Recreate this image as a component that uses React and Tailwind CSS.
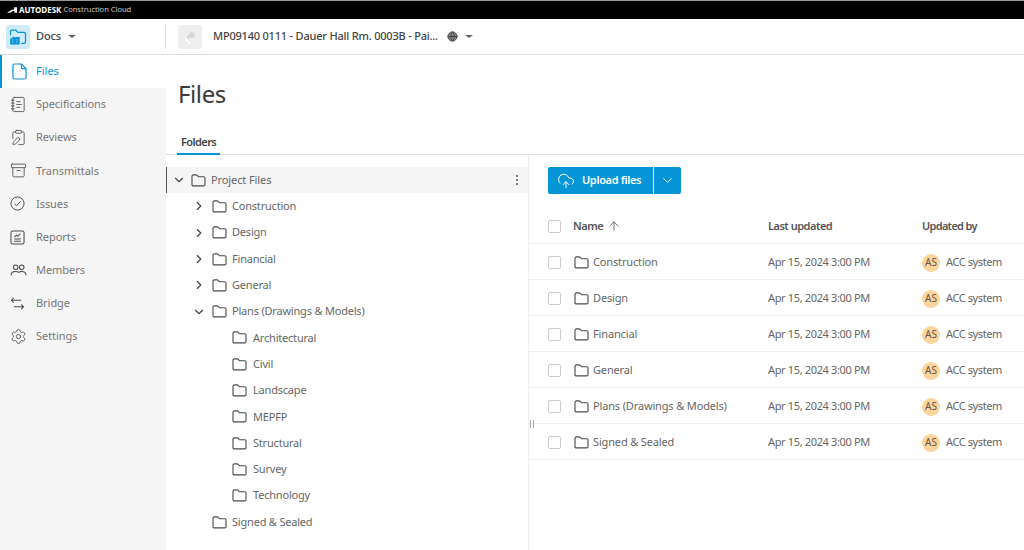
import { Archive, ArrowUp, ChevronDown, ChevronRight, ClipboardPen, CloudUpload, Globe, NotebookText, Settings } from "lucide-react";

const FolderIcon = ({ className = "" }) => (
  <svg viewBox="0 0 16 14" fill="none" stroke="currentColor" strokeWidth="1.2" className={`w-[15px] h-[13px] text-[#4a4a4a] ${className}`}>
    <path d="M1 11.5V2.3C1 1.6 1.6 1 2.3 1h3.2c.5 0 .8.2 1.1.5L8 3h5.7c.7 0 1.3.6 1.3 1.3v7.2c0 .7-.6 1.3-1.3 1.3H2.3C1.6 12.8 1 12.2 1 11.5Z" />
  </svg>
);

const FileIcon = () => (
  <svg viewBox="0 0 16 18" fill="none" stroke="currentColor" strokeWidth="1.3" className="w-[15px] h-[17px]">
    <path d="M3 1h7l5 5v9c0 1.1-.9 2-2 2H3c-1.1 0-2-.9-2-2V3c0-1.1.9-2 2-2Z" />
    <path d="M10 1v3.5c0 .8.7 1.5 1.5 1.5H15" />
  </svg>
);

const IssueIcon = () => (
  <svg viewBox="0 0 16 16" fill="none" stroke="currentColor" strokeWidth="1" className="w-[15px] h-[15px]">
    <circle cx="8" cy="8" r="7" />
    <path d="M4.8 8.3 7 10.5l4.2-4.8" />
  </svg>
);

const ReportIcon = () => (
  <svg viewBox="0 0 16 16" fill="none" stroke="currentColor" strokeWidth="1.1" className="w-[15px] h-[15px]">
    <rect x="1" y="1" width="14" height="14" rx="2" />
    <path d="M4.5 7.5 7 5.5l1.3 1.2L11 4M4.5 9.5h7M4.5 12h7" />
  </svg>
);

const MembersIcon = () => (
  <svg viewBox="0 0 18 14" fill="none" stroke="currentColor" strokeWidth="1.1" className="w-[17px] h-[13px]">
    <circle cx="6" cy="3.5" r="2.4" />
    <circle cx="12.5" cy="3.5" r="2.4" />
    <path d="M1 12c0-2.6 2.2-4 5-4 1.3 0 2.4.3 3.2 1 .8-.7 2-1 3.3-1 2.7 0 4.5 1.4 4.5 4" />
  </svg>
);

const BridgeIcon = () => (
  <svg viewBox="0 0 16 14" fill="none" stroke="currentColor" strokeWidth="1.1" className="w-[15px] h-[13px]">
    <path d="M4 1 1.5 3.5 4 6M1.5 3.5H12M12 8l2.5 2.5L12 13M14.5 10.5H4" />
  </svg>
);

const HubIcon = () => (
  <svg viewBox="0 0 24 24" fill="none" className="w-[20px] h-[20px]">
    <path d="M3 10V5.5C3 4.4 3.8 3.6 4.8 3.6h4.5L12 6.4h7.2c1.1 0 1.8.8 1.8 1.8v9.6c0 1.1-.8 1.9-1.8 1.9H16" stroke="#0696d7" strokeWidth="1.5" />
    <path d="M2.5 14.5 7 11.5l2 1.5v-1h5v9H2.5z" fill="#0696d7" />
    <path d="M5 15.5h1.5M5 18h1.5M10 15.5h1.5M10 18h1.5" stroke="#cdebf8" strokeWidth="1" />
  </svg>
);

const ProjectThumb = () => (
  <svg viewBox="0 0 24 24" className="w-[24px] h-[24px]">
    <path d="M13 6.5 17 8.5 16 13 12 12.5 9.5 14 8.5 12.5z" fill="#d6d6d6" />
    <path d="M7.5 13.5 12 18.5" stroke="#fff" strokeWidth="2" fill="none" />
  </svg>
);

const LogoMark = () => (
  <svg viewBox="0 0 14 8" className="w-[10px] h-[6px] fill-white">
    <path d="M0 8 7.5 3.2H10V0h4v8h-3.6V5.5H8.3L4.5 8z" />
  </svg>
);

const sideItems = [
  ["Specifications", <NotebookText key="a" size={17} strokeWidth={1.2} />],
  ["Reviews", <ClipboardPen key="b" size={17} strokeWidth={1.2} />],
  ["Transmittals", <Archive key="c" size={17} strokeWidth={1.2} />],
  ["Issues", <IssueIcon key="d" />],
  ["Reports", <ReportIcon key="e" />],
  ["Members", <MembersIcon key="f" />],
  ["Bridge", <BridgeIcon key="g" />],
  ["Settings", <Settings key="h" size={17} strokeWidth={1.2} />],
];

const treeTop = ["Construction", "Design", "Financial", "General"];
const planFolders = ["Architectural", "Civil", "Landscape", "MEPFP", "Structural", "Survey", "Technology"];
const tableRows = ["Construction", "Design", "Financial", "General", "Plans (Drawings & Models)", "Signed & Sealed"];

function TreeRow({ label, indent, gap, icon }) {
  return (
    <div className={`flex h-[26.3px] items-center ${indent}`}>
      <span className="flex w-[20px] justify-start text-[#444]">{icon}</span>
      <FolderIcon />
      <span className={`${gap} tracking-[-0.2px] text-[#666]`}>{label}</span>
    </div>
  );
}

export default function App() {
  return (
    <div className="flex h-[550px] w-[1024px] flex-col overflow-hidden bg-white text-[11px] [font-family:'Noto_Sans',sans-serif]">
      <div className="flex h-[19px] items-center gap-[2px] border-t border-[#999] bg-black pl-[7px] text-[8px] text-white">
        <LogoMark />
        <span className="font-bold">AUTODESK</span>
        <span className="text-[7.5px] text-[#ccc]">Construction Cloud</span>
      </div>

      <div className="flex h-[36px] items-center border-b border-[#ddd]">
        <div className="flex w-[165px] items-center pl-[6px]">
          <div className="flex h-[24px] w-[24px] items-center justify-center rounded-[3px] bg-[#cdebf8]">
            <HubIcon />
          </div>
          <span className="ml-[6px] font-medium tracking-[-0.1px] text-[#444]">Docs</span>
          <span className="ml-[7px] h-0 w-0 border-x-[4px] border-t-[3px] border-x-transparent border-t-[#666]" />
        </div>
        <div className="flex h-[24px] items-center border-l border-[#ddd] pl-[12px]">
          <div className="flex h-[24px] w-[24px] items-center justify-center rounded-[3px] bg-[#eee]">
            <ProjectThumb />
          </div>
          <span className="ml-[11px] font-medium tracking-[-0.2px] text-[#444]">MP09140 0111 - Dauer Hall Rm. 0003B - Pai...</span>
          <Globe size={11} className="ml-[9px] text-[#444]" fill="#888" />
          <span className="ml-[7px] h-0 w-0 border-x-[4px] border-t-[3px] border-x-transparent border-t-[#666]" />
        </div>
      </div>

      <div className="flex min-h-0 flex-1">
        <nav className="w-[166px] bg-[#f5f5f5]">
          <div className="flex h-[33px] items-center gap-[9px] border-l-2 border-[#0696d7] bg-white pl-[10px] text-[#0696d7]">
            <FileIcon />
            <span>Files</span>
          </div>
          {sideItems.map(([label, icon]) => (
            <div key={label} className="flex h-[33.15px] items-center pl-[10px]">
              <span className="flex w-[26px] items-center text-[#4a4a4a]">{icon}</span>
              <span className="tracking-[-0.05px] text-[#777]">{label}</span>
            </div>
          ))}
        </nav>

        <main className="flex min-w-0 flex-1 flex-col">
          <h1 className="h-[73px] pl-[12px] pt-[21px] text-[24px] leading-[36px] font-normal tracking-[-0.4px] text-[#3c3c3c]">Files</h1>
          <div className="h-[27px] border-b border-[#ddd] pl-[11px]">
            <span className="inline-block h-[27px] border-b-2 border-[#0696d7] px-[4px] pt-[6px] leading-[16px] font-semibold tracking-[-0.6px] text-[#444]">Folders</span>
          </div>

          <div className="flex min-h-0 flex-1">
            <section className="relative w-[363px] border-r border-[#eee] pt-[12px]">
              <div className="flex h-[26.3px] items-center border-l border-[#555] bg-[#f5f5f5] pl-[5px] pr-[10px]">
                <ChevronDown size={14} className="text-[#444]" />
                <FolderIcon className="ml-[5px]" />
                <span className="ml-[5px] tracking-[-0.1px] text-[#666]">Project Files</span>
                <span className="ml-auto flex flex-col gap-[2px]">
                  <i className="h-[2px] w-[2px] rounded-full bg-[#555]" />
                  <i className="h-[2px] w-[2px] rounded-full bg-[#555]" />
                  <i className="h-[2px] w-[2px] rounded-full bg-[#555]" />
                </span>
              </div>
              {treeTop.map((t) => (
                <TreeRow key={t} label={t} indent="pl-[26px]" gap="ml-[5px]" icon={<ChevronRight size={14} />} />
              ))}
              <TreeRow label="Plans (Drawings & Models)" indent="pl-[26px]" gap="ml-[5px]" icon={<ChevronDown size={14} />} />
              {planFolders.map((t) => (
                <TreeRow key={t} label={t} indent="pl-[46px]" gap="ml-[6px]" />
              ))}
              <TreeRow label="Signed & Sealed" indent="pl-[26px]" gap="ml-[5px]" />
              <span className="absolute right-[-6px] top-[265px] h-[8px] w-[4px] border-x border-[#aaa]" />
            </section>

            <section className="min-w-0 flex-1 pt-[12px]">
              <div className="ml-[19px] flex h-[27px] w-[133px] rounded-[2px] bg-[#0696d7] font-semibold text-white">
                <div className="flex flex-1 items-center gap-[7px] border-r border-white pl-[9px]">
                  <CloudUpload size={18} strokeWidth={1.3} />
                  <span className="tracking-[-0.35px]">Upload files</span>
                </div>
                <div className="flex w-[27px] items-center justify-center">
                  <ChevronDown size={15} strokeWidth={1.5} />
                </div>
              </div>

              <div className="mt-[14px] flex h-[36px] items-center border-b border-[#eee] pb-[0px] pl-[19px] pt-[1px] font-semibold tracking-[-0.5px] text-[#555]">
                <span className="h-[13px] w-[13px] rounded-[2px] border border-[#ccc]" />
                <div className="ml-[12px] flex w-[195px] items-center gap-[4px]">
                  <span>Name</span>
                  <ArrowUp size={14} strokeWidth={1.4} />
                </div>
                <span className="w-[154px]">Last updated</span>
                <span className="tracking-[-0.7px]">Updated by</span>
              </div>

              {tableRows.map((name) => (
                <div key={name} className="flex h-[36px] items-center border-b border-[#eee] pl-[19px] pt-[2px] text-[#666]">
                  <span className="h-[13px] w-[13px] rounded-[2px] border border-[#ccc]" />
                  <div className="ml-[13px] flex w-[194px] items-center">
                    <FolderIcon />
                    <span className="ml-[4px] tracking-[-0.15px]">{name}</span>
                  </div>
                  <span className="w-[154px] tracking-[-0.35px]">Apr 15, 2024 3:00 PM</span>
                  <span className="flex h-[18px] w-[18px] items-center justify-center rounded-full bg-[#fdd59b] text-[10px] text-[#555]">AS</span>
                  <span className="ml-[6px] tracking-[-0.4px]">ACC system</span>
                </div>
              ))}
            </section>
          </div>
        </main>
      </div>
    </div>
  );
}
